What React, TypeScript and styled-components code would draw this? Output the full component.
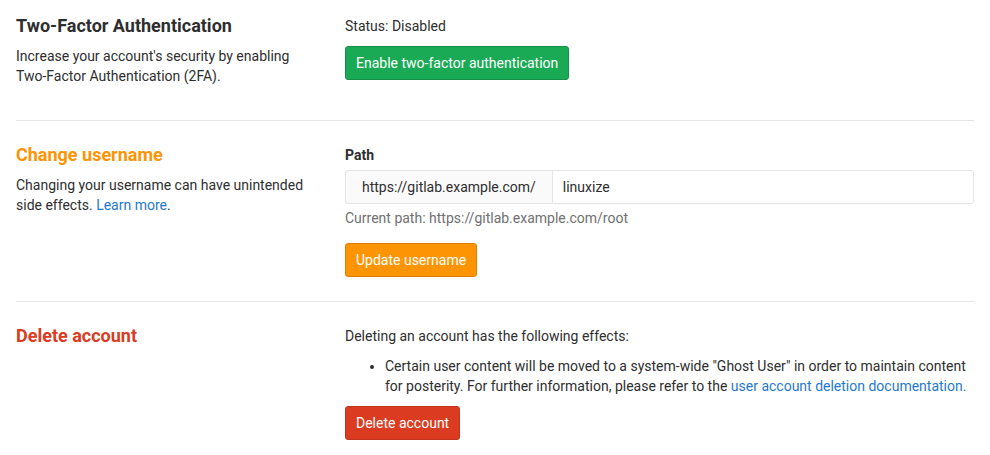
import React from "react";
import styled, { createGlobalStyle } from "styled-components";

const Global = createGlobalStyle`
  * { box-sizing: border-box; }
  body {
    margin: 0;
    background: #fff;
    font-family: Roboto, "Liberation Sans", sans-serif;
    font-size: 14px;
    line-height: 20px;
    color: #2e2e2e;
  }
`;

const Page = styled.div`
  padding: 16px 16px 0;
`;

const Section = styled.section`
  display: grid;
  grid-template-columns: 299px 1fr;
  column-gap: 30px;
  align-items: start;
`;

const Divider = styled.hr`
  border: 0;
  border-top: 1px solid #e5e5e5;
  margin: 24px 0;
`;

const Title = styled.h4<{ $tone?: "default" | "warning" | "danger" }>`
  margin: 0 0 10px;
  font-size: 18px;
  line-height: 20px;
  font-weight: 700;
  color: ${(p) =>
    p.$tone === "warning" ? "#fc9403" : p.$tone === "danger" ? "#db3b21" : "#2e2e2e"};
`;

const Text = styled.p`
  margin: 0 0 10px;
`;

const Link = styled.a`
  color: #1f78d1;
  text-decoration: none;
`;

const Button = styled.button<{ $variant: "success" | "warning" | "danger" }>`
  display: inline-block;
  height: 34px;
  padding: 6px 10px;
  font-family: inherit;
  font-size: 14px;
  line-height: 20px;
  border-radius: 3px;
  color: #fff;
  cursor: pointer;
  border: 1px solid
    ${(p) => (p.$variant === "success" ? "#168f48" : p.$variant === "warning" ? "#de7e00" : "#c0341d")};
  background: ${(p) =>
    p.$variant === "success" ? "#1aaa55" : p.$variant === "warning" ? "#fc9403" : "#db3b21"};
`;

const Label = styled.label`
  display: block;
  font-weight: 700;
  margin-bottom: 5px;
`;

const InputGroup = styled.div`
  display: flex;
  height: 34px;
`;

const Addon = styled.span`
  display: flex;
  align-items: center;
  padding: 0 16px;
  background: #fafafa;
  border: 1px solid #e5e5e5;
  border-right: 0;
  border-radius: 3px 0 0 3px;
  white-space: nowrap;
`;

const Input = styled.input`
  flex: 1;
  min-width: 0;
  padding: 0 10px;
  border: 1px solid #e5e5e5;
  border-radius: 0 3px 3px 0;
  font-family: inherit;
  font-size: 14px;
  color: #2e2e2e;
  outline: none;
`;

const Help = styled.p`
  margin: 4px 0 15px;
  color: #707070;
`;

const List = styled.ul`
  margin: 0 0 10px;
  padding-left: 40px;
`;

export default function App() {
  return (
    <>
      <Global />
      <Page>
        <Section>
          <div>
            <Title>Two-Factor Authentication</Title>
            <Text>Increase your account's security by enabling Two-Factor Authentication (2FA).</Text>
          </div>
          <div>
            <Text>Status: Disabled</Text>
            <Button $variant="success">Enable two-factor authentication</Button>
          </div>
        </Section>
        <Divider />
        <Section>
          <div>
            <Title $tone="warning">Change username</Title>
            <Text>
              Changing your username can have unintended side effects. <Link href="#">Learn more</Link>.
            </Text>
          </div>
          <div>
            <Label>Path</Label>
            <InputGroup>
              <Addon>https://gitlab.example.com/</Addon>
              <Input defaultValue="linuxize" />
            </InputGroup>
            <Help>Current path: https://gitlab.example.com/root</Help>
            <Button $variant="warning">Update username</Button>
          </div>
        </Section>
        <Divider />
        <Section>
          <div>
            <Title $tone="danger">Delete account</Title>
          </div>
          <div>
            <Text>Deleting an account has the following effects:</Text>
            <List>
              <li>
                Certain user content will be moved to a system-wide "Ghost User" in order to maintain content for
                posterity. For further information, please refer to the{" "}
                <Link href="#">user account deletion documentation.</Link>
              </li>
            </List>
            <Button $variant="danger">Delete account</Button>
          </div>
        </Section>
      </Page>
    </>
  );
}
